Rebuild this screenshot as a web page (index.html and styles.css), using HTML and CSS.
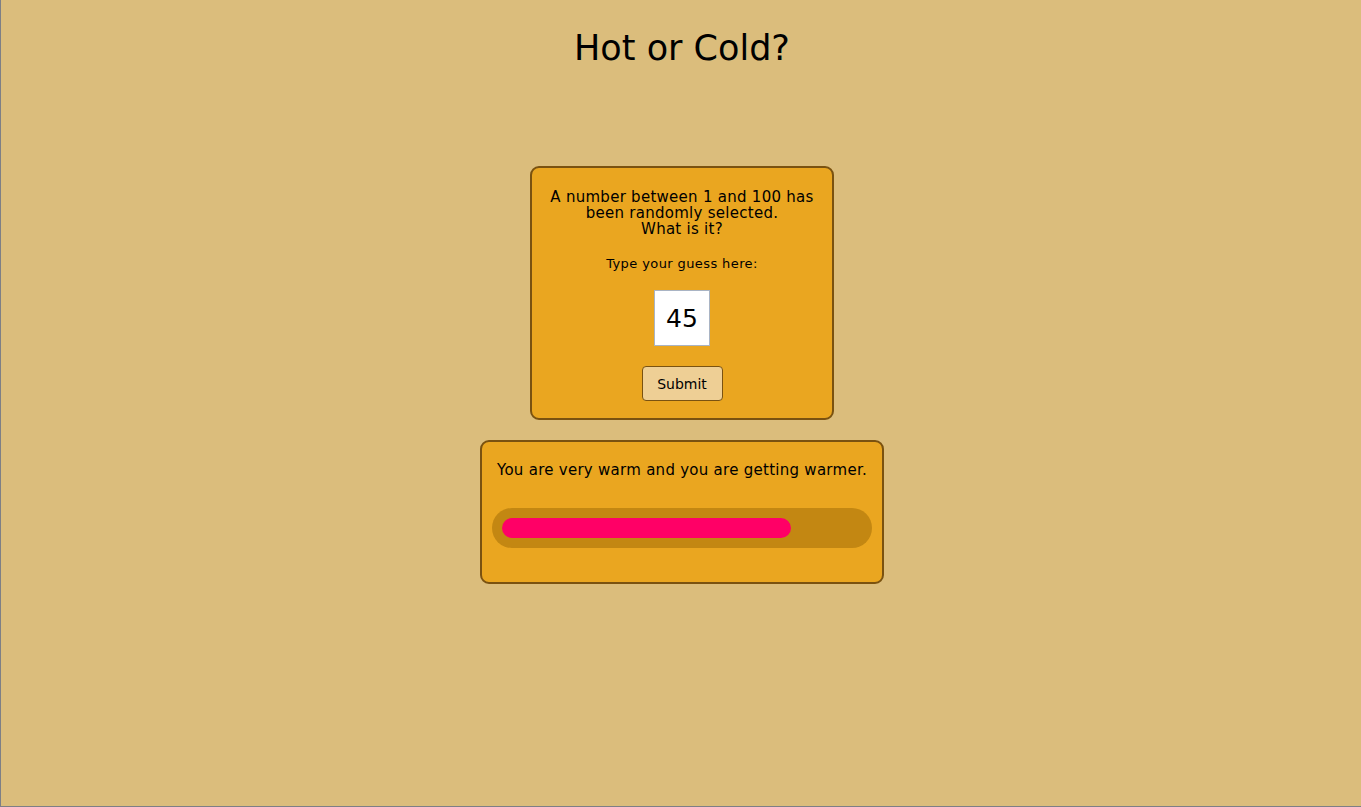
FILE: index.html
```html
<!DOCTYPE html>
<html>
<head>
<meta charset="utf-8">
<title>Hot or Cold?</title>
<link rel="stylesheet" href="styles.css">
</head>
<body>
<div class="page">
  <h1 class="title">Hot or Cold?</h1>
  <div class="card guess-card">
    <p class="intro">A number between 1 and 100 has<br>been randomly selected.<br>What is it?</p>
    <p class="label">Type your guess here:</p>
    <input class="guess" type="text" value="45">
    <button class="submit">Submit</button>
  </div>
  <div class="card result-card">
    <p class="result">You are very warm and you are getting warmer.</p>
    <div class="track"><div class="fill" style="width: 289px"></div></div>
  </div>
</div>
</body>
</html>
```

FILE: styles.css
```css
html, body {
  margin: 0;
  padding: 0;
}
body {
  background: #dbbd7c;
  font-family: "DejaVu Sans", "Lucida Grande", sans-serif;
  color: #000;
}
.page {
  box-sizing: border-box;
  height: 807px;
  border-left: 1px solid #7d7f86;
  border-bottom: 1px solid #7d7f86;
  padding-left: 2px;
  display: flex;
  flex-direction: column;
  align-items: center;
}
.title {
  margin: 26px 0 0;
  font-size: 35px;
  font-weight: normal;
  line-height: 44px;
  height: 44px;
}
.card {
  box-sizing: border-box;
  background: #eaa620;
  border: 2px solid #7a5210;
  border-radius: 9px;
  display: flex;
  flex-direction: column;
  align-items: center;
}
.guess-card {
  margin-top: 96px;
  width: 304px;
  height: 254px;
  padding-top: 21px;
}
.intro {
  margin: 0;
  font-size: 15px;
  line-height: 16px;
  text-align: center;
  letter-spacing: 0.27px;
  white-space: nowrap;
}
.label {
  margin: 19px 0 0;
  font-size: 13px;
  line-height: 16px;
  letter-spacing: 0.4px;
}
.guess {
  box-sizing: border-box;
  margin-top: 18px;
  width: 56px;
  height: 56px;
  border: 1px solid #a9b4c4;
  background: #fff;
  font-family: "DejaVu Sans", sans-serif;
  font-size: 25px;
  text-align: center;
  padding: 0;
  color: #000;
  outline: none;
}
.submit {
  box-sizing: border-box;
  margin-top: 20px;
  width: 81px;
  height: 35px;
  background: #eecf95;
  border: 1px solid #7a5210;
  border-radius: 4px;
  font-family: "DejaVu Sans", sans-serif;
  font-size: 14px;
  color: #000;
  padding: 0;
}
.result-card {
  margin-top: 20px;
  width: 404px;
  height: 144px;
  padding: 19px 10px 0;
}
.result {
  margin: 0;
  font-size: 15px;
  line-height: 18px;
  letter-spacing: 0.27px;
  white-space: nowrap;
}
.track {
  margin-top: 29px;
  width: 380px;
  height: 40px;
  box-sizing: border-box;
  background: #c38712;
  border-radius: 20px;
  padding: 10px;
}
.fill {
  height: 20px;
  background: #ff0066;
  border-radius: 10px;
}
```
